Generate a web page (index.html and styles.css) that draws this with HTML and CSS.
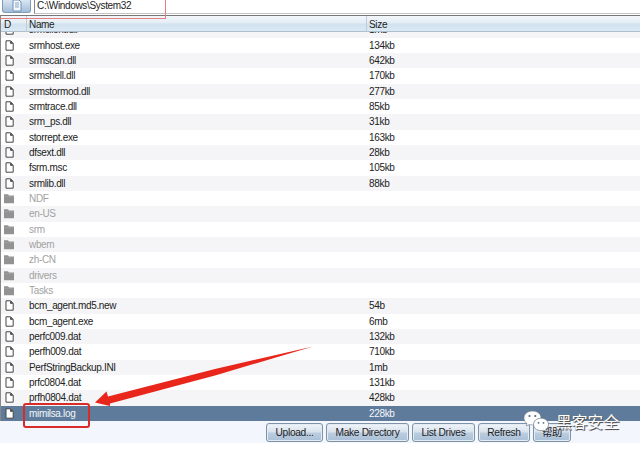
FILE: index.html
```
<!DOCTYPE html>
<html lang="en">
<head>
<meta charset="utf-8">
<title>File Browser</title>
<link rel="stylesheet" href="styles.css">
</head>
<body>
<svg class="defs" width="0" height="0">
  <symbol id="file" viewBox="0 0 9 11"><path d="M1 .8h4.6L8.2 3.4v6.8H1z" fill="#fff" stroke="#444" stroke-width="1"/><path d="M5.2 .8v3h3z" fill="#333"/></symbol>
  <symbol id="folder" viewBox="0 0 10 11"><path d="M0 1.2h4l1 1.4h5v7.6H0z" fill="#929292"/><path d="M.5 3.7h9" stroke="#a9a9a9" stroke-width=".6"/></symbol>
</svg>
<div class="window">
  <div class="toolbar">
    <div class="up"><svg width="10" height="12" viewBox="0 0 10 12"><path d="M1 0h6l2 2v9H1z" fill="#f4f8fc" stroke="#6e93b8"/><path d="M3 3h4M3 5h4M3 7h4" stroke="#86a5c3"/></svg></div>
    <div class="path">C:\Windows\System32</div>
  </div>
  <div class="table">
    <div class="row head"><span>D</span><span>Name</span><span>Size</span></div>
    <div class="body" id="rows"></div>
  </div>
  <div class="actions">
    <div class="btn upload">Upload...</div>
    <div class="btn make">Make Directory</div>
    <div class="btn drives">List Drives</div>
    <div class="btn refresh">Refresh</div>
    <div class="btn help">帮助</div>
  </div>
  <div class="path-mark"></div>
  <div class="file-mark"></div>
  <svg class="arrow" width="220" height="64" viewBox="0 0 220 64"><path d="M218 1.500L120 24 13 51.500 11.500 46.500 0 57.500l15 3.500v-2.500L120 30.500z" fill="#e8261b"/></svg>
  <div class="watermark">
    <svg width="27" height="23" viewBox="0 0 27 23">
      <path d="M9.500 1C4.500 1 1 4 1 8c0 2.400 1.200 4.300 3 5.600L3.200 16l3.100-1.500c1 .3 2.100.4 3.200.4 5 0 8.500-3 8.500-7S14.500 1 9.500 1z" fill="#fff" stroke="#6b7884" stroke-width=".6"/>
      <path d="M18 8.200c-4.300 0-7.500 2.700-7.500 6.200s3.200 6.200 7.500 6.200c1 0 1.900-.1 2.700-.4l2.900 1.500-.8-2.400c1.700-1.100 2.700-2.900 2.700-4.900 0-3.500-3.200-6.200-7.500-6.200z" fill="#fff" stroke="#6b7884" stroke-width=".7"/>
      <g fill="#52697f"><circle cx="6.500" cy="6" r="1.100"/><circle cx="12.300" cy="6" r="1.100"/><circle cx="15.500" cy="12.800" r=".9"/><circle cx="20.500" cy="12.800" r=".9"/></g>
    </svg>
    <span>黑客安全</span>
  </div>
</div>
<script src="rows.js"></script>
</body>
</html>
```
FILE: styles.css
```
* { box-sizing: border-box; }
body { margin: 0; background: #fff; font: 10px/15px "Liberation Sans", "Noto Sans CJK SC", sans-serif; letter-spacing: -.33px; color: #222; }
.defs { position: absolute; }
.window { position: relative; width: 640px; height: 451px; overflow: hidden; display: flex; flex-direction: column; }
.toolbar { height: 15px; flex: none; display: flex; gap: 3px; padding-left: 2px; }
.up { width: 29px; height: 13px; border: 1px solid #7f9db9; border-top: 0; border-radius: 0 0 3px 3px; background: linear-gradient(#dae6f2, #a3bdd8); display: flex; justify-content: center; }
.path { flex: 1; height: 14px; line-height: 12px; padding-left: 2px; border-left: 1px solid #888; border-bottom: 1px solid #c4c4c4; }
.table { height: 406px; flex: none; border-top: 1.500px solid #777; border-left: 1px solid #888; display: flex; flex-direction: column; }
.row { display: grid; grid-template-columns: 25px 340px 1fr; height: 15.333px; flex: none; }
.row span { padding-left: 3px; white-space: pre; line-height: 15.333px; }
.head { height: 16px; background: linear-gradient(#f3f7fb, #e3edf5 48%, #d1e1ee 52%, #dbe9f4); border-bottom: 1px solid #aebfce; }
.head span { line-height: 17px; }
.head span + span { border-left: 1px solid #bccddb; padding-left: 2px; }
.body { flex: 1; min-height: 0; overflow: hidden; display: flex; flex-direction: column; justify-content: flex-end; }
.body .row:nth-child(odd) { background: #f5f5f7; }
.folder { color: #a2a2a2; }
.body .row.selected { background: #5e7b9b; color: #f4f7fa; }
.icon { display: block; width: 9px; height: 11px; margin: 2px 0 0 4px; }
.folder .icon { width: 10px; margin-left: 3px; }
.actions { height: 22px; flex: none; padding: 2px 0 0 266px; display: flex; gap: 3px; background: #f4f6fd; }
.btn { height: 19px; border: 1px solid #7f93a8; border-radius: 3px; background: linear-gradient(#f1f5f9, #d7e1ec 48%, #bccddf 52%, #a9c0d8); text-align: center; line-height: 18px; font-size: 10.200px; white-space: nowrap; box-shadow: inset 0 0 0 1px #e3ebf3; }
.upload { width: 57px; }
.make { width: 83px; }
.drives { width: 63px; }
.refresh { width: 52px; }
.help { width: 38px; }
.path-mark { position: absolute; left: -2px; top: -2px; width: 168px; height: 21px; border: 1px solid #e57f83; }
.file-mark { position: absolute; left: 23px; top: 403px; width: 67px; height: 25px; border: 2.500px solid #d72c28; border-radius: 3px; }
.arrow { position: absolute; left: 95px; top: 345px; }
.watermark { position: absolute; left: 523px; top: 410px; display: flex; align-items: flex-start; gap: 6px; }
.watermark span { color: #fff; font: 15.800px/24px "Noto Sans CJK SC", sans-serif; letter-spacing: 0; text-shadow: 1px 1px 0 #555, 0 1px 1px #777; }
```
FILE: rows.js
```
const files = [
  ["srmclient.dll", "1mb"], ["srmhost.exe", "134kb"], ["srmscan.dll", "642kb"],
  ["srmshell.dll", "170kb"], ["srmstormod.dll", "277kb"], ["srmtrace.dll", "85kb"],
  ["srm_ps.dll", "31kb"], ["storrept.exe", "163kb"], ["dfsext.dll", "28kb"],
  ["fsrm.msc", "105kb"], ["srmlib.dll", "88kb"],
  ["NDF"], ["en-US"], ["srm"], ["wbem"], ["zh-CN"], ["drivers"], ["Tasks"],
  ["bcm_agent.md5.new", "54b"], ["bcm_agent.exe", "6mb"], ["perfc009.dat", "132kb"],
  ["perfh009.dat", "710kb"], ["PerfStringBackup.INI", "1mb"], ["prfc0804.dat", "131kb"],
  ["prfh0804.dat", "428kb"], ["mimilsa.log", "228kb"]
];
document.getElementById("rows").innerHTML = files.map(([name, size], i) => {
  const kind = size ? "file" : "folder";
  const state = i === files.length - 1 ? " selected" : "";
  return `<div class="row ${kind}${state}"><svg class="icon"><use href="#${kind}"/></svg><span>${name}</span><span>${size || ""}</span></div>`;
}).join("");
```
